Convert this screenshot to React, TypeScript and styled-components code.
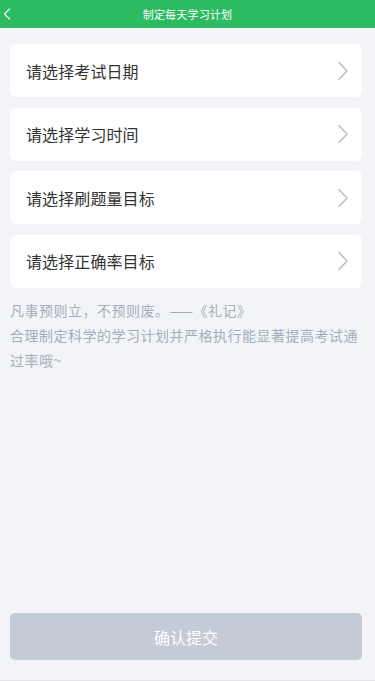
import React from "react";
import styled, { createGlobalStyle } from "styled-components";

const Global = createGlobalStyle`
  html, body { margin: 0; padding: 0; }
  body {
    background: #f3f4f7;
    font-family: "Noto Sans CJK SC", "Noto Sans", sans-serif;
  }
  * { box-sizing: border-box; }
`;

const Page = styled.div`
  width: 375px;
  height: 681px;
  display: flex;
  flex-direction: column;
  background: #f3f4f7;
  border-bottom: 1px solid #e2e4e9;
`;

const Header = styled.header`
  height: 28px;
  background: #2dbb62;
  display: flex;
  align-items: center;
  justify-content: center;
  position: relative;
  flex-shrink: 0;
`;

const Title = styled.h1`
  margin: 0;
  font-size: 11px;
  font-weight: 400;
  color: #ffffff;
  letter-spacing: 0.2px;
  line-height: 1;
`;

const BackButton = styled.button`
  position: absolute;
  left: 0;
  top: 0;
  height: 28px;
  width: 20px;
  border: none;
  background: transparent;
  padding: 0 0 0 2px;
  display: flex;
  align-items: center;
`;

const Content = styled.main`
  flex: 1;
  display: flex;
  flex-direction: column;
  padding: 16px 13px 0 10px;
`;

const List = styled.div`
  display: flex;
  flex-direction: column;
  gap: 10.5px;
`;

const Row = styled.div`
  height: 53px;
  background: #ffffff;
  border-radius: 6px;
  display: flex;
  align-items: center;
  justify-content: space-between;
  padding: 0 12px 0 16px;
`;

const RowLabel = styled.span`
  font-size: 16px;
  color: #333333;
  letter-spacing: 0.1px;
`;

const Note = styled.p`
  margin: 10px -3px 0 0;
  font-size: 14px;
  letter-spacing: 0.5px;
  line-height: 25px;
  color: #a6adba;
`;

const Spacer = styled.div`
  flex: 1;
`;

const SubmitButton = styled.button`
  height: 47px;
  margin-bottom: 20px;
  border: none;
  border-radius: 5px;
  background: #c4cad6;
  color: #ffffff;
  font-family: inherit;
  font-size: 16px;
  letter-spacing: 0px;
`;

const Chevron = () => (
  <svg width="14" height="22" viewBox="0 0 14 22" fill="none">
    <path d="M3 2.5 L11 11 L3 19.5" stroke="#b5bac5" strokeWidth="1.4" strokeLinecap="round" strokeLinejoin="round" />
  </svg>
);

const BackIcon = () => (
  <svg width="10" height="14" viewBox="0 0 10 14" fill="none">
    <path d="M7.5 2 L2.5 7 L7.5 12" stroke="#e6f7ec" strokeWidth="1.3" strokeLinecap="round" strokeLinejoin="round" />
  </svg>
);

const items = ["请选择考试日期", "请选择学习时间", "请选择刷题量目标", "请选择正确率目标"];

export default function App() {
  return (
    <>
      <Global />
      <Page>
        <Header>
          <BackButton aria-label="返回">
            <BackIcon />
          </BackButton>
          <Title>制定每天学习计划</Title>
        </Header>
        <Content>
          <List>
            {items.map((t) => (
              <Row key={t}>
                <RowLabel>{t}</RowLabel>
                <Chevron />
              </Row>
            ))}
          </List>
          <Note>
            凡事预则立，不预则废。——《礼记》
            <br />
            合理制定科学的学习计划并严格执行能显著提高考试通过率哦~
          </Note>
          <Spacer />
          <SubmitButton>确认提交</SubmitButton>
        </Content>
      </Page>
    </>
  );
}
